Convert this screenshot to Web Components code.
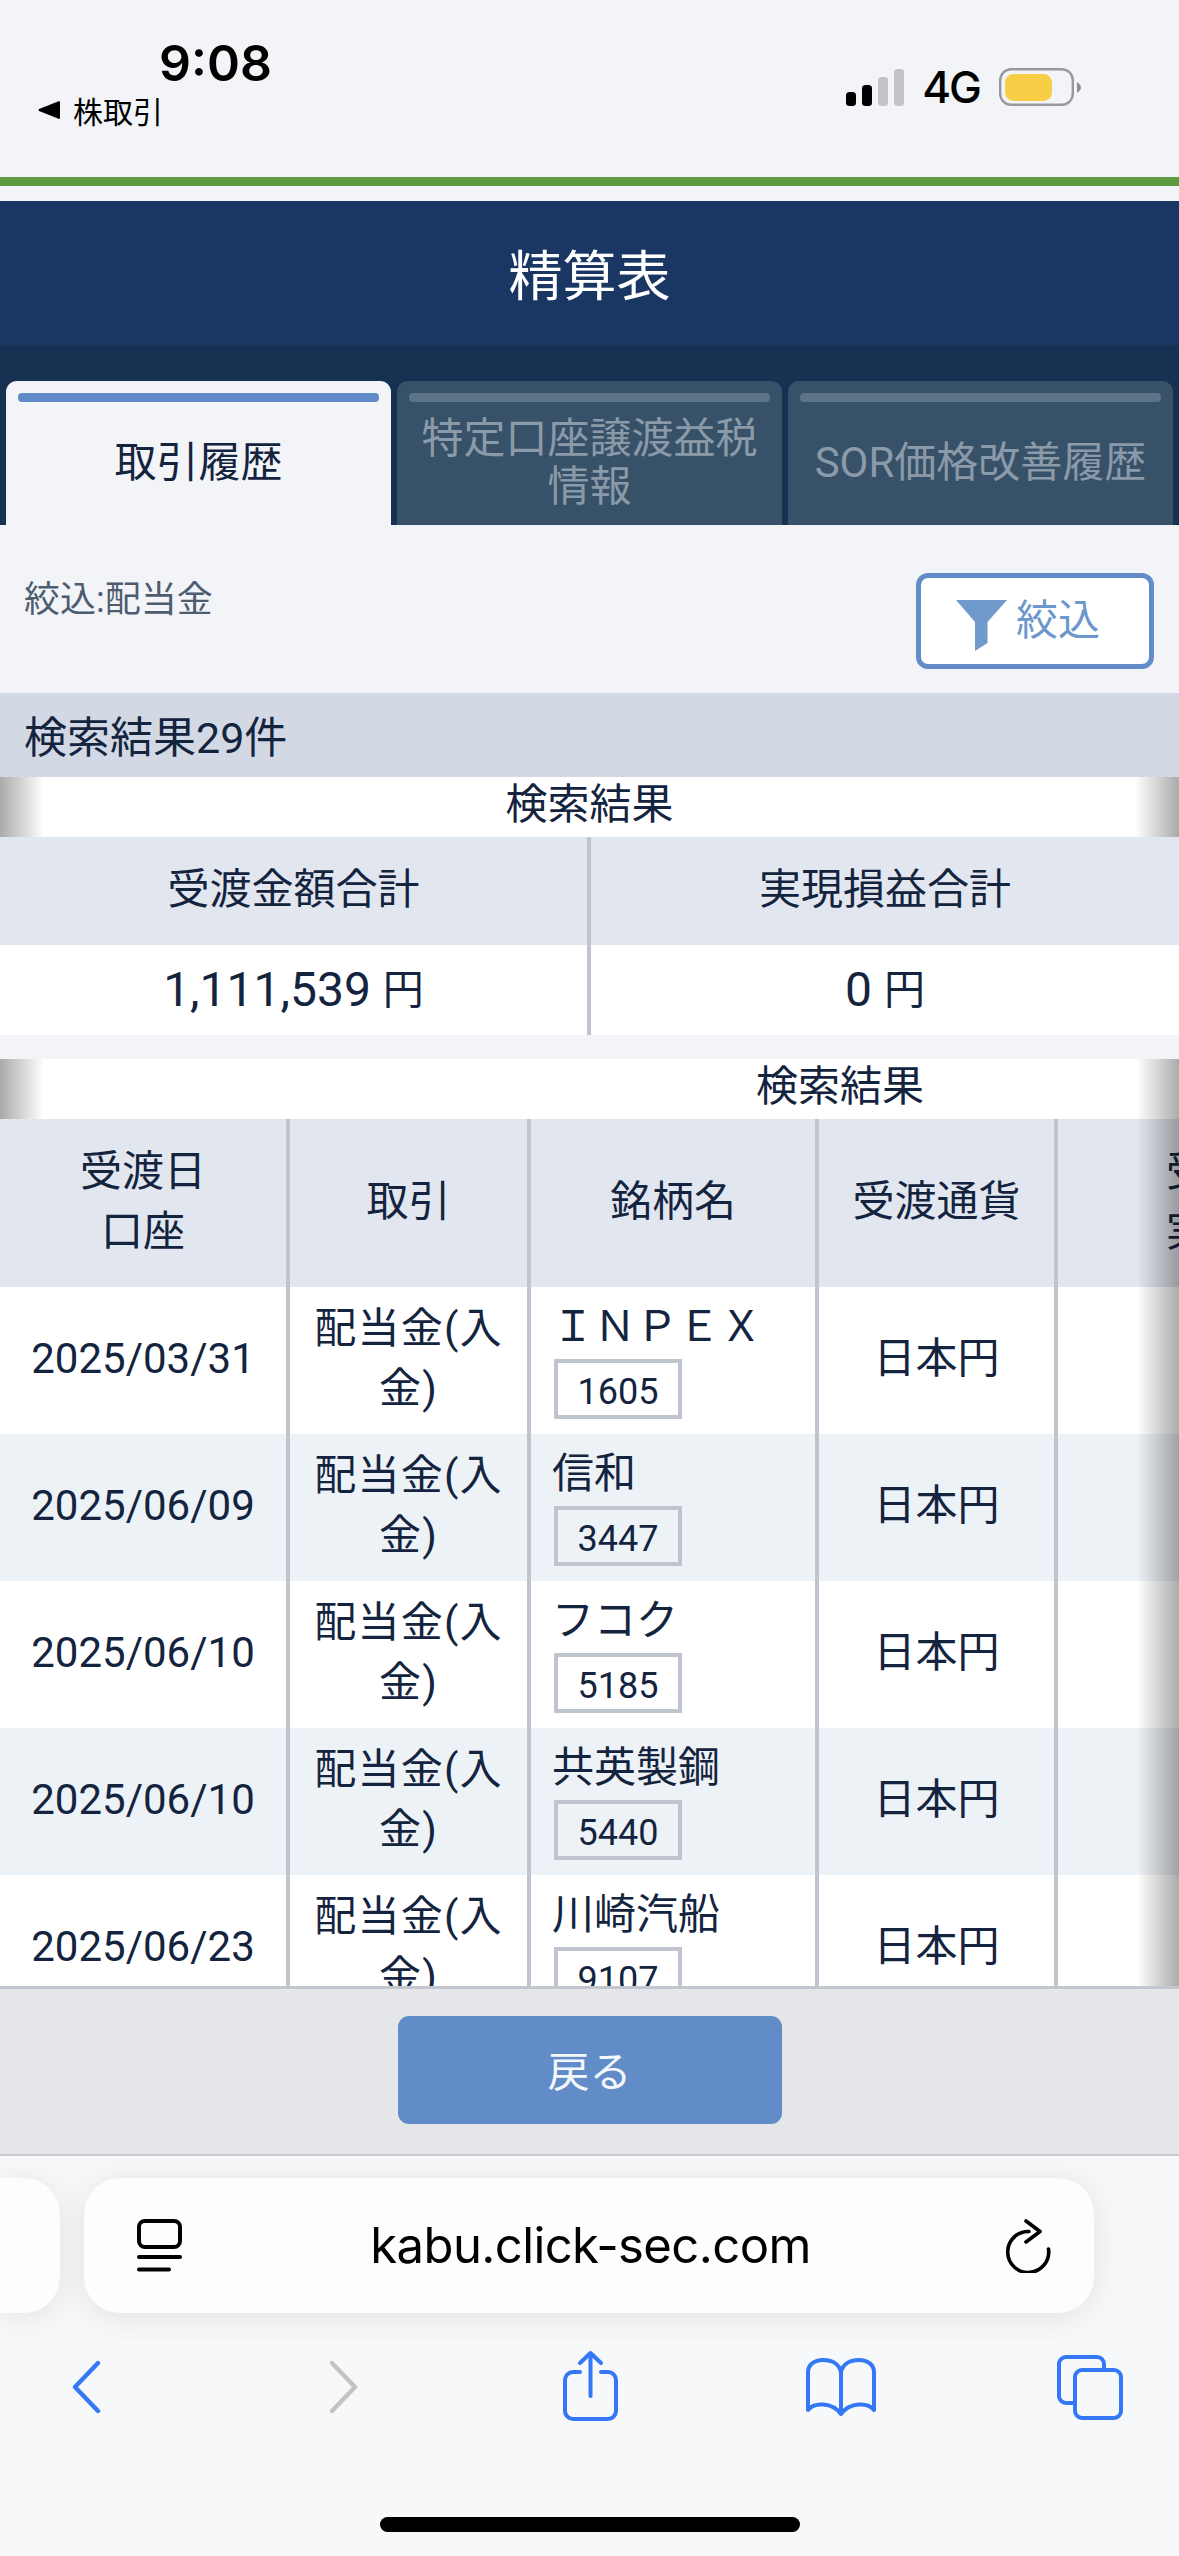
<!DOCTYPE html>
<html lang="ja">
<head>
<meta charset="utf-8">
<title>精算表</title>
<style>
html, body { margin: 0; padding: 0; background: #f2f4f8; overflow: hidden; }
body {
  width: 1179px;
  height: 2556px;
  display: flex;
  flex-direction: column;
  font-family: Roboto, "Noto Sans CJK JP", sans-serif;
  color: #14243f;
}
</style>
</head>
<body>
<status-bar></status-bar>
<page-title>精算表</page-title>
<tab-bar>
  <tab-item active>取引履歴</tab-item>
  <tab-item>特定口座譲渡益税<br>情報</tab-item>
  <tab-item>SOR価格改善履歴</tab-item>
</tab-bar>
<filter-row>絞込:配当金</filter-row>
<result-count>検索結果29件</result-count>
<summary-table></summary-table>
<trade-table>
  <trade-row date="2025/03/31" name="ＩＮＰＥＸ" code="1605"></trade-row>
  <trade-row alt date="2025/06/09" name="信和" code="3447"></trade-row>
  <trade-row date="2025/06/10" name="フコク" code="5185"></trade-row>
  <trade-row alt date="2025/06/10" name="共英製鋼" code="5440"></trade-row>
  <trade-row date="2025/06/23" name="川崎汽船" code="9107"></trade-row>
</trade-table>
<footer-bar>戻る</footer-bar>
<safari-bar>kabu.click-sec.com</safari-bar>

<script>
// every element below is just a template in a shadow root
function shadowOf(el, html) {
  const shadow = el.attachShadow({mode: 'open'});
  shadow.innerHTML = html;
  return shadow;
}

class StatusBar extends HTMLElement {
  constructor() {
    super();
    shadowOf(this, /*html*/`
<style>
:host{ display:block; height:186px; box-sizing:border-box; border-bottom:9px solid #5f9a43; }
#row{ display:flex; justify-content:space-between; align-items:flex-start; height:177px; }
#left{ padding-top:38px; }
#time{ font:600 50px/51px Inter, sans-serif; color:#000; padding-left:159px; }
#back{ display:flex; align-items:center; gap:13px; margin-top:3px; padding-left:38px; height:36px;
  font:400 30px/36px "Noto Sans CJK JP", sans-serif; color:#000; }
#right{ display:flex; align-items:center; padding:68px 98px 0 0; height:38px; }
#net{ font:500 44px/38px Inter, sans-serif; color:#000; margin:0 19px 0 18px; letter-spacing:-2px; }
svg{ display:block; }
</style>
<div id="row">
  <div id="left">
    <div id="time">9:08</div>
    <div id="back">
      <svg width="22" height="20" viewBox="0 0 22 20"><path d="M20 1.5Q22 0 22 3V17Q22 20 20 18.5L1 11Q0 10 1 9Z" fill="#000"/></svg>
      <span>株取引</span>
    </div>
  </div>
  <div id="right">
    <svg width="58" height="37" viewBox="0 0 58 37">
      <rect x="0" y="23" width="10" height="14" rx="3.5" fill="#000"/>
      <rect x="16" y="16" width="10" height="21" rx="3.5" fill="#000"/>
      <rect x="32" y="8" width="10" height="29" rx="3.5" fill="#c1c3c8"/>
      <rect x="48" y="0" width="10" height="37" rx="3.5" fill="#c1c3c8"/>
    </svg>
    <span id="net">4G</span>
    <svg width="82" height="38" viewBox="0 0 82 38">
      <rect x="1.2" y="1.2" width="72.6" height="35.6" rx="11" fill="none" stroke="#98999c" stroke-width="2.4"/>
      <rect x="6" y="6" width="47" height="27" rx="8.5" fill="#f7ce46"/>
      <path d="M78 14Q82 17 82 19.5Q82 22 78 25Z" fill="#8c8d90"/>
    </svg>
  </div>
</div>`);
  }
}
customElements.define('status-bar', StatusBar);

class PageTitle extends HTMLElement {
  constructor() {
    super();
    shadowOf(this, /*html*/`
<style>
:host{ display:flex; align-items:center; justify-content:center; height:144px; margin-top:15px;
  background:#1a3764; color:#fff; font:400 54px/1 "Noto Sans CJK JP", sans-serif; }
</style>
<slot></slot>`);
  }
}
customElements.define('page-title', PageTitle);

class TabBar extends HTMLElement {
  constructor() {
    super();
    shadowOf(this, /*html*/`
<style>
:host{ display:flex; gap:6px; height:180px; box-sizing:border-box; padding:36px 6px 0; background:#173152; }
</style>
<slot></slot>`);
  }
}
customElements.define('tab-bar', TabBar);

class TabItem extends HTMLElement {
  constructor() {
    super();
    shadowOf(this, /*html*/`
<style>
:host{ flex:1; display:flex; flex-direction:column; background:#375268; color:#8b9aa9;
  border-radius:11px 11px 0 0; padding:12px 12px 0; box-sizing:border-box;
  font:400 42px/48px Roboto, "Noto Sans CJK JP", sans-serif; }
:host([active]){ background:#f2f4f8; color:#14243f; }
#bar{ height:9px; border-radius:4px; background:#5c7488; flex:none; }
:host([active]) #bar{ background:#618cc7; }
#label{ flex:1; display:flex; align-items:center; justify-content:center; text-align:center; margin-top:-1px; white-space:nowrap; }
</style>
<div id="bar"></div>
<div id="label"><div><slot></slot></div></div>`);
  }
}
customElements.define('tab-item', TabItem);

class FilterRow extends HTMLElement {
  constructor() {
    super();
    shadowOf(this, /*html*/`
<style>
:host{ display:flex; justify-content:space-between; align-items:flex-start; height:168px; box-sizing:border-box;
  padding:48px 25px 0 24px; font:400 36px/50px Roboto, "Noto Sans CJK JP", sans-serif; color:#4e5c70; }
button{ all:unset; box-sizing:border-box; display:flex; align-items:center; gap:9px; width:238px; height:96px;
  padding:0 0 0 35px; background:#fff; border:5px solid #618cc7; border-radius:12px;
  color:#6d97cc; font:400 42px/50px Roboto, "Noto Sans CJK JP", sans-serif; }
svg{ display:block; margin-top:8px; }
#lead{ margin-top:2px; }
</style>
<div id="lead"><slot></slot></div>
<button><svg width="51" height="51" viewBox="0 0 51 51"><path d="M0 0H51L31.5 22V43L19 51V22Z" fill="#7099cc"/></svg><span>絞込</span></button>`);
  }
}
customElements.define('filter-row', FilterRow);

class ResultCount extends HTMLElement {
  constructor() {
    super();
    shadowOf(this, /*html*/`
<style>
:host{ display:flex; align-items:center; height:84px; box-sizing:border-box; padding:6px 24px 0;
  background:#d2d9e4; color:#14243f; font:400 43px/1 Roboto, "Noto Sans CJK JP", sans-serif; }
</style>
<slot></slot>`);
  }
}
customElements.define('result-count', ResultCount);

class SummaryTable extends HTMLElement {
  constructor() {
    super();
    shadowOf(this, /*html*/`
<style>
:host{ display:block; margin-bottom:24px; font:400 42px/60px Roboto, "Noto Sans CJK JP", sans-serif; color:#14243f; }
#cap{ height:60px; line-height:56px; text-align:center; background:
  linear-gradient(to right,#aaa,rgba(255,255,255,0) 44px),
  linear-gradient(to left,#aaa,rgba(255,255,255,0) 44px), #fff; }
#grid{ display:grid; grid-template-columns:587px 1fr; grid-template-rows:108px 90px; }
.c{ display:flex; align-items:center; justify-content:center; }
.h{ background:#e2e7ef; padding-bottom:3px; box-sizing:border-box; }
.v{ background:#fff; gap:12px; }
.r{ border-left:4px solid #c0c4cf; }
.n{ font-size:48px; }
.y{ font-size:41px; }
</style>
<div id="cap">検索結果</div>
<div id="grid">
  <div class="c h">受渡金額合計</div>
  <div class="c h r">実現損益合計</div>
  <div class="c v"><span class="n">1,111,539</span><span class="y">円</span></div>
  <div class="c v r"><span class="n">0</span><span class="y">円</span></div>
</div>`);
  }
}
customElements.define('summary-table', SummaryTable);

// column widths of the scrolled table, shared with the rows through a custom property
const tradeCols = '290px 241px 288px 239px 384px 238px';

class TradeTable extends HTMLElement {
  constructor() {
    super();
    shadowOf(this, /*html*/`
<style>
:host{ display:block; position:relative; height:927px; overflow:hidden; flex:none;
  --cols:${tradeCols}; --line:#c0c4cf; font:400 42px/60px Roboto, "Noto Sans CJK JP", sans-serif; color:#14243f; }
#table{ width:1680px; }
#cap{ height:60px; line-height:56px; text-align:center; background:#fff; }
#head{ display:grid; grid-template-columns:var(--cols); height:168px; background:#e2e7ef; }
#head div{ display:flex; align-items:center; justify-content:center; text-align:center; padding-bottom:3px; box-sizing:border-box;
  border-right:4px solid var(--line); }
#head div.open{ border-right:0; justify-content:flex-start; text-align:left; padding-left:108px; }
/* scroll hints lying over the table */
#hint-l{ position:absolute; left:0; top:0; width:44px; height:60px; background:linear-gradient(to right,#aaa,rgba(170,170,170,0)); }
#hint-r{ position:absolute; right:0; top:0; bottom:0; width:42px; background:linear-gradient(to left,rgba(0,0,0,.33),rgba(0,0,0,0)); }
</style>
<div id="table">
  <div id="cap">検索結果</div>
  <div id="head">
    <div>受渡日<br>口座</div>
    <div>取引</div>
    <div>銘柄名</div>
    <div>受渡通貨</div>
    <div class="open">受<br>実</div>
  </div>
  <slot></slot>
</div>
<div id="hint-l"></div>
<div id="hint-r"></div>`);
  }
}
customElements.define('trade-table', TradeTable);

class TradeRow extends HTMLElement {
  constructor() {
    super();
    shadowOf(this, /*html*/`
<style>
:host{ display:grid; grid-template-columns:var(--cols); height:147px; background:#fff; }
:host([alt]){ background:#edf2f6; }
.c{ border-right:4px solid var(--line); box-sizing:border-box; }
.m{ display:flex; align-items:center; justify-content:center; padding-bottom:4px; }
#kind{ padding:12px 20px 0; text-align:center; letter-spacing:1.2px; }
#date{ font-size:42px; }
#name{ padding:10px 0 0 21px; white-space:nowrap; }
#code{ box-sizing:border-box; width:128px; height:60px; margin:2px 0 0 2px; border:4px solid var(--line);
  font-size:36px; line-height:58px; text-align:center; }
</style>
<div class="c m" id="date"></div>
<div class="c" id="kind">配当金(入金)</div>
<div class="c" id="name"><div id="label"></div><div id="code"></div></div>
<div class="c m">日本円</div>
<div></div>`);
    this.shadowRoot.querySelector('#date').textContent = this.getAttribute('date');
    this.shadowRoot.querySelector('#label').textContent = this.getAttribute('name');
    this.shadowRoot.querySelector('#code').textContent = this.getAttribute('code');
  }
}
customElements.define('trade-row', TradeRow);

class FooterBar extends HTMLElement {
  constructor() {
    super();
    shadowOf(this, /*html*/`
<style>
:host{ display:flex; justify-content:center; align-items:flex-start; height:170px; box-sizing:border-box;
  padding-top:27px; background:#e4e6e9; border-top:3px solid #c4c6cf; border-bottom:2px solid #c8cacd; }
button{ all:unset; display:flex; align-items:center; justify-content:center; width:384px; height:108px;
  border-radius:11px; background:#618cc7; color:#f4f7fb; font:400 42px/1 "Noto Sans CJK JP", sans-serif; padding-bottom:3px; box-sizing:border-box; }
</style>
<button><slot></slot></button>`);
  }
}
customElements.define('footer-bar', FooterBar);

class SafariBar extends HTMLElement {
  constructor() {
    super();
    shadowOf(this, /*html*/`
<style>
:host{ display:block; flex:1; background:#f6f8f9; }
#pills{ display:flex; gap:24px; padding-top:22px; overflow:hidden; height:185px; box-sizing:border-box; }
.pill{ height:135px; background:#fcfdfd; box-shadow:0 4px 34px rgba(0,0,0,.09); flex:none; }
#prev{ width:60px; border-radius:0 36px 36px 0; }
#url{ width:1010px; border-radius:36px; display:flex; align-items:center; box-sizing:border-box; padding:0 43px 0 53px; justify-content:space-between; }
#host{ font:400 49px/1 Inter, sans-serif; color:#000; letter-spacing:-.6px; margin-right:6px; }
#tools{ display:flex; align-items:center; height:76px; padding:0 0 0 71px; margin-top:8px; }
svg{ display:block; flex:none; fill:none; stroke-linecap:round; stroke-linejoin:round; }
#home{ width:420px; height:15px; border-radius:8px; background:#000; margin:92px auto 0; }
</style>
<div id="pills">
  <div class="pill" id="prev"></div>
  <div class="pill" id="url">
    <svg width="45" height="53" viewBox="0 0 45 53" stroke="#000" stroke-width="4">
      <rect x="2" y="2" width="41" height="26" rx="6"/><path d="M2 38H43M2 50.5H32"/>
    </svg>
    <span id="host"><slot></slot></span>
    <svg width="46" height="54" viewBox="0 0 46 54" stroke="#000" stroke-width="3.6">
      <path d="M24 12.5A20.5 20.5 0 1 0 43.5 30"/><path d="M21 2L35 12.5L21 23"/>
    </svg>
  </div>
</div>
<div id="tools">
  <svg width="30" height="54" viewBox="0 0 30 54" stroke="#3478f6" stroke-width="4.4"><path d="M27 3L4 27L27 51"/></svg>
  <svg style="margin-left:228px" width="30" height="54" viewBox="0 0 30 54" stroke="#c2c3c5" stroke-width="4.4"><path d="M3 3L26 27L3 51"/></svg>
  <svg style="margin-left:204px;margin-bottom:4px" width="55" height="71" viewBox="0 0 55 71" stroke="#3478f6" stroke-width="4">
    <path d="M17 22H10a8 8 0 0 0-8 8V61a8 8 0 0 0 8 8H45a8 8 0 0 0 8-8V30a8 8 0 0 0-8-8H38"/>
    <path d="M27.500 46V3M17 13L27.500 3L38 13"/>
  </svg>
  <svg style="margin-left:188px" width="70" height="58" viewBox="0 0 70 58" stroke="#3478f6" stroke-width="4">
    <path d="M35 14C33 6 26 2 17 2C8 2 2 7 2 14V52C8 44 26 44 35 56C44 44 62 44 68 52V14C68 7 62 2 53 2C44 2 37 6 35 14V56"/>
  </svg>
  <svg style="margin-left:181px" width="66" height="66" viewBox="0 0 66 66" stroke="#3478f6" stroke-width="4">
    <rect x="18" y="16" width="46" height="48" rx="7"/>
    <path d="M47 14V10a7 7 0 0 0-7-7H9a7 7 0 0 0-7 7V42a7 7 0 0 0 7 7H16"/>
  </svg>
</div>
<div id="home"></div>`);
  }
}
customElements.define('safari-bar', SafariBar);
</script>
</body>
</html>
